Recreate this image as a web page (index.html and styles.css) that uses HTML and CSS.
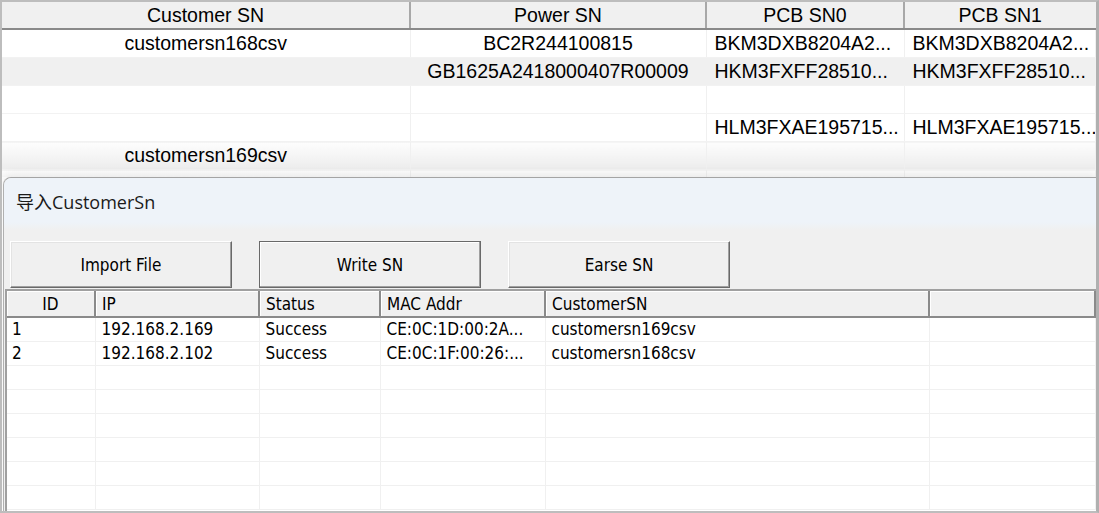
FILE: index.html
```html
<!DOCTYPE html>
<html lang="zh-CN">
<head>
  <meta charset="UTF-8">
  <title>导入CustomerSn</title>
  <link rel="stylesheet" href="styles.css">
</head>
<body>
  <div class="ventana">
    <div class="tabla-sn">
      <table>
        <colgroup>
          <col style="width:408px">
          <col style="width:296px">
          <col style="width:198px">
          <col>
        </colgroup>
        <thead>
          <tr>
            <th>Customer SN</th>
            <th>Power SN</th>
            <th>PCB SN0</th>
            <th>PCB SN1</th>
          </tr>
        </thead>
        <tbody>
          <tr>
            <td class="centro">customersn168csv</td>
            <td class="centro">BC2R244100815</td>
            <td>BKM3DXB8204A2...</td>
            <td>BKM3DXB8204A2...</td>
          </tr>
          <tr class="gris">
            <td class="centro"></td>
            <td class="centro">GB1625A2418000407R00009</td>
            <td>HKM3FXFF28510...</td>
            <td>HKM3FXFF28510...</td>
          </tr>
          <tr>
            <td></td><td></td><td></td><td></td>
          </tr>
          <tr>
            <td></td><td></td>
            <td>HLM3FXAE195715...</td>
            <td>HLM3FXAE195715...</td>
          </tr>
          <tr class="sombra">
            <td class="centro">customersn169csv</td>
            <td></td><td></td><td></td>
          </tr>
          <tr class="sombra">
            <td></td><td></td><td></td><td></td>
          </tr>
        </tbody>
      </table>
    </div>

    <div class="dialogo">
      <div class="dialogo-titulo">导入CustomerSn</div>
      <div class="dialogo-cuerpo">
        <div class="botones">
          <button class="boton">Import File</button>
          <button class="boton defecto">Write SN</button>
          <button class="boton">Earse SN</button>
        </div>

        <div class="lista">
          <table>
            <colgroup>
              <col style="width:88px">
              <col style="width:164px">
              <col style="width:121px">
              <col style="width:165px">
              <col style="width:384px">
              <col>
            </colgroup>
            <thead>
              <tr>
                <th class="centro">ID</th>
                <th>IP</th>
                <th>Status</th>
                <th>MAC Addr</th>
                <th>CustomerSN</th>
                <th></th>
              </tr>
            </thead>
            <tbody>
              <tr><td>1</td><td>192.168.2.169</td><td>Success</td><td>CE:0C:1D:00:2A...</td><td>customersn169csv</td><td></td></tr>
              <tr><td>2</td><td>192.168.2.102</td><td>Success</td><td>CE:0C:1F:00:26:...</td><td>customersn168csv</td><td></td></tr>
              <tr><td></td><td></td><td></td><td></td><td></td><td></td></tr>
              <tr><td></td><td></td><td></td><td></td><td></td><td></td></tr>
              <tr><td></td><td></td><td></td><td></td><td></td><td></td></tr>
              <tr><td></td><td></td><td></td><td></td><td></td><td></td></tr>
              <tr><td></td><td></td><td></td><td></td><td></td><td></td></tr>
              <tr><td></td><td></td><td></td><td></td><td></td><td></td></tr>
            </tbody>
          </table>
        </div>
      </div>
    </div>
  </div>
</body>
</html>
```

FILE: styles.css
```css
body {
  margin: 0;
  background: #fff;
}

.ventana {
  width: 1099px;
  height: 513px;
  box-sizing: border-box;
  border: 2px solid #bdbdbd;
  border-right: 3px solid #b0b0b0;
  background: #fff;
  overflow: hidden;
  display: flex;
  flex-direction: column;
}

/* tabla de arriba */
.tabla-sn {
  height: 175px;
  flex: none;
  overflow: hidden;
}

.tabla-sn table {
  width: 100%;
  table-layout: fixed;
  border-collapse: collapse;
  font-family: "Liberation Sans", Arial, sans-serif;
  font-size: 19.5px;
  color: #000;
}

.tabla-sn th {
  height: 26px;
  padding: 0;
  font-weight: normal;
  text-align: center;
  background: #f0f0f0;
  border-bottom: 2px solid #8a8a8a;
  border-right: 2px solid #a8a8a8;
  line-height: 26px;
}

.tabla-sn th:last-child {
  border-right: none;
}

.tabla-sn td {
  height: 27px;
  padding: 0 0 0 8px;
  border-right: 1px solid #f0f0f0;
  border-bottom: 1px solid #f2f2f2;
  white-space: nowrap;
  overflow: hidden;
}

.tabla-sn td.centro {
  text-align: center;
  padding: 0;
}

.tabla-sn tr.gris td {
  background: #f0f0f0;
}

.tabla-sn tr.sombra td {
  background: linear-gradient(#fdfdfd, #ececec);
}

/* ventana de dialogo */
.dialogo {
  flex: 1;
  margin-left: 1px;
  position: relative;
  display: flex;
  flex-direction: column;
  background: #f0f0f0;
  border-top: 1px solid #a4a4a4;
  border-left: 1px solid #b0b0b0;
  border-radius: 8px 0 0 0;
  box-shadow: 0 -4px 8px rgba(0, 0, 0, 0.06);
}

.dialogo-titulo {
  height: 52px;
  padding-left: 12px;
  line-height: 48px;
  font-family: "Open Sans", "Noto Sans CJK SC", sans-serif;
  font-size: 18px;
  color: #1a1a1a;
  background: linear-gradient(#eef3f9 85%, #f0f0f0);
  border-radius: 8px 0 0 0;
}

.dialogo-cuerpo {
  flex: 1;
  display: flex;
  flex-direction: column;
  padding-top: 11px;
}

.botones {
  display: flex;
  gap: 27px;
  padding-left: 6px;
}

.boton {
  width: 222px;
  height: 47px;
  box-sizing: border-box;
  padding: 0;
  font-family: "DejaVu Sans Condensed", "DejaVu Sans", sans-serif;
  font-size: 17px;
  color: #000;
  background: #f0f0f0;
  border: 1px solid;
  border-color: #fff #696969 #696969 #fff;
  box-shadow: inset -1px -1px 0 #a0a0a0, inset 1px 1px 0 #e3e3e3;
}

.boton.defecto {
  border-color: #696969;
  box-shadow: inset -1px -1px 0 #a0a0a0, inset 1px 1px 0 #fff;
}

/* lista de resultados */
.lista {
  flex: 1;
  margin-left: 1px;
  margin-top: 1px;
  background: #fff;
  border-top: 2px solid #a0a0a0;
  border-left: 2px solid #a0a0a0;
  overflow: hidden;
}

.lista table {
  width: 100%;
  table-layout: fixed;
  border-collapse: collapse;
  font-family: "DejaVu Sans Condensed", "DejaVu Sans", sans-serif;
  font-size: 17px;
  color: #000;
}

.lista th {
  height: 25px;
  padding: 0 0 0 6px;
  font-weight: normal;
  text-align: left;
  background: #f0f0f0;
  border-right: 2px solid #8a8a8a;
  border-bottom: 2px solid #8a8a8a;
  box-shadow: inset 1px 1px 0 #fff;
  line-height: 24px;
}

.lista th.centro {
  text-align: center;
  padding: 0;
}

.lista td {
  height: 23px;
  padding: 0 0 0 5px;
  border-right: 1px solid #f0f0f0;
  border-bottom: 1px solid #f0f0f0;
  white-space: nowrap;
  overflow: hidden;
  line-height: 23px;
}

.lista td:nth-child(n+2) {
  padding-left: 6px;
}
```
